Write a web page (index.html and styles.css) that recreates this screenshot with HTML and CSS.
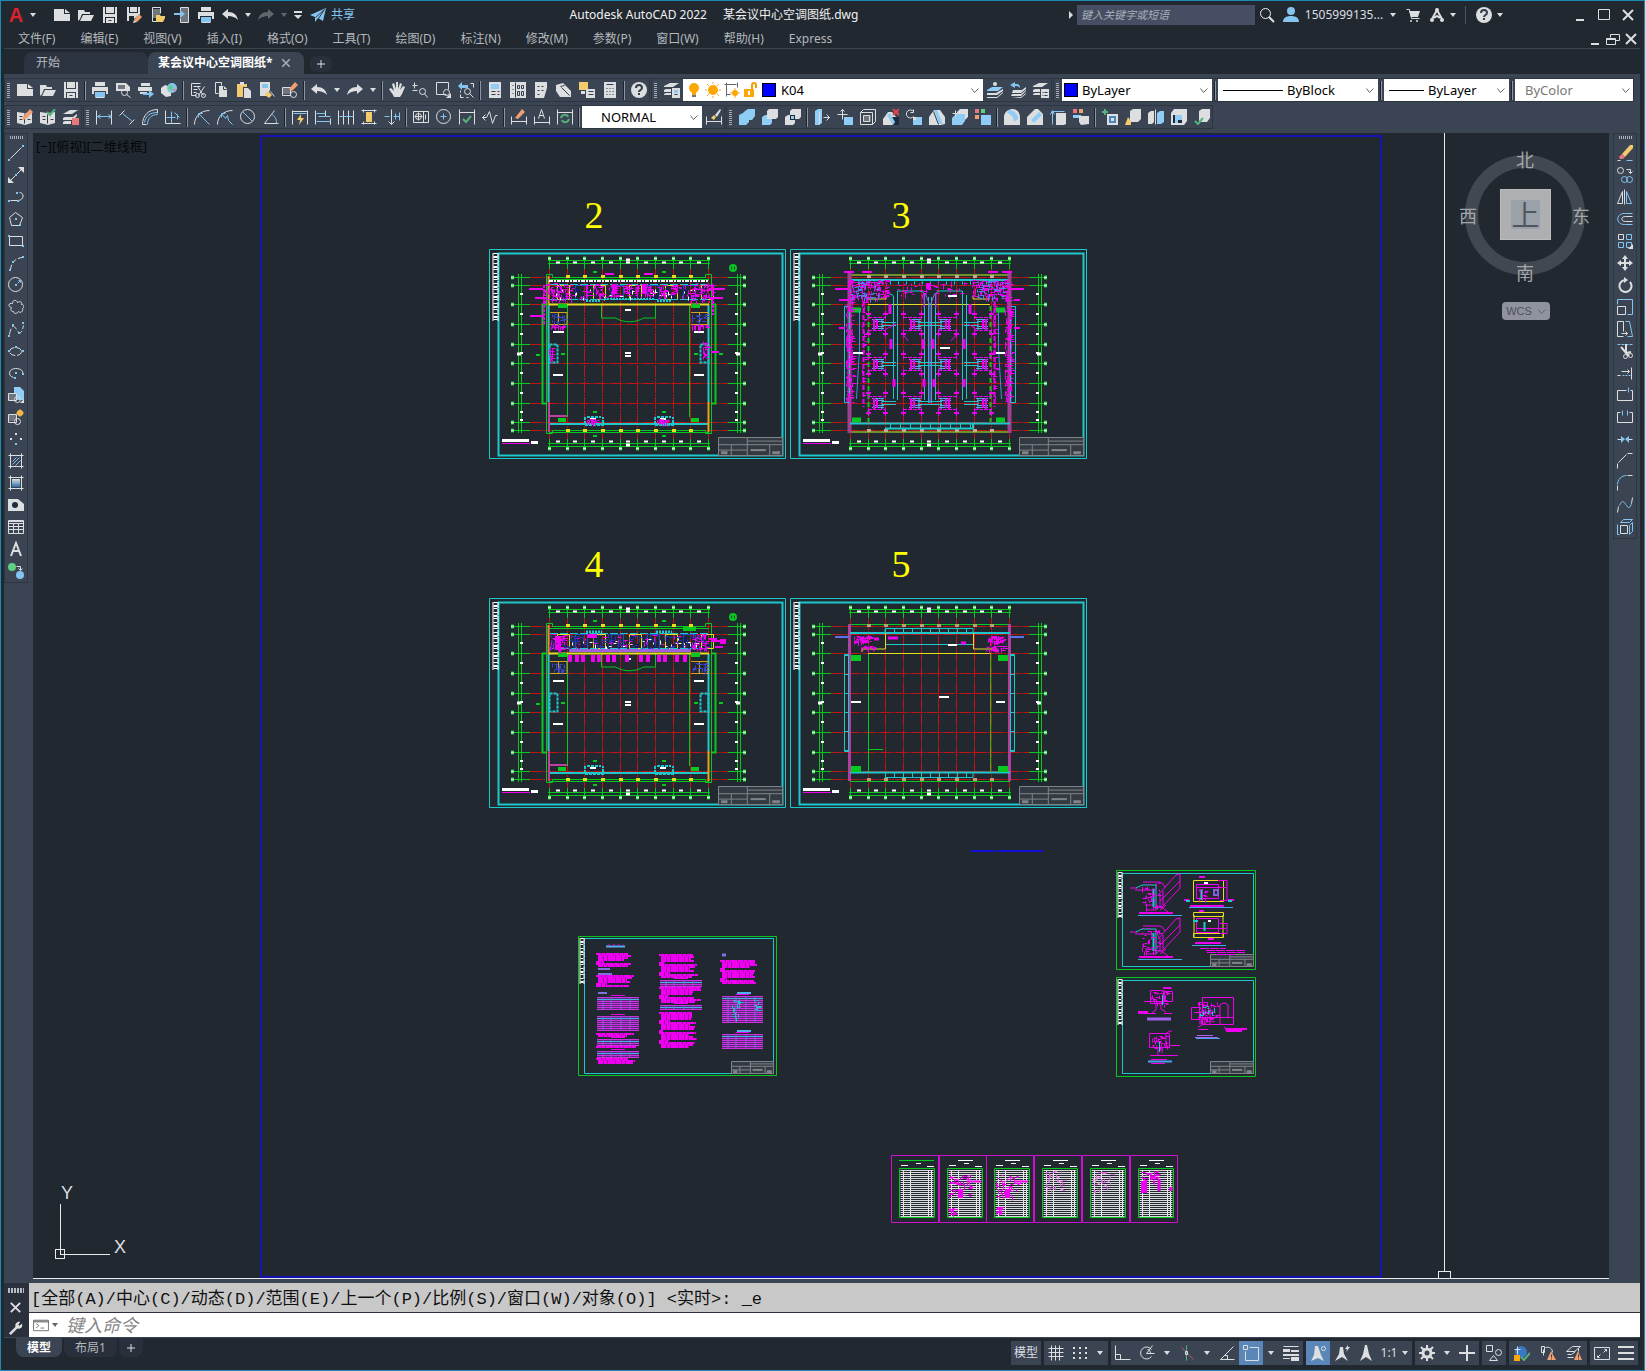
FILE: index.html
```html
<!DOCTYPE html>
<html lang="zh-CN">
<head>
  <meta charset="UTF-8" />
  <meta name="viewport" content="width=device-width, initial-scale=1.0"/>
  <title>Autodesk AutoCAD 2022 某会议中心空调图纸.dwg</title>
  <link rel="stylesheet" href="styles.css">
</head>
<body>
  <svg class="defs" aria-hidden="true">
    <defs>
      <linearGradient id="fade" x1="0" y1="0" x2="0" y2="1"><stop offset="0" stop-color="#dcdee0"/><stop offset="1" stop-color="#2f6ea5"/></linearGradient>

      <!-- files -->
      <symbol id="i-new" viewBox="0 0 16 16"><path class="wf" d="M0 2h10v5h6v7H0z"/><path class="wf" d="M11 2l5 4h-5z"/></symbol>
      <symbol id="i-open" viewBox="0 0 16 16"><path class="wf" d="M0 3h6l1 2h5v2H4l-2 5-2 2zM5 8h11l-3 6H2z"/></symbol>
      <symbol id="i-save" viewBox="0 0 16 16"><path class="wf" d="M1 0h2v7h10V0h2v16h-2v-6H3v6H1z"/><path class="wf" d="M4 0h8v6H4zM4 11h8v5H4z"/><path class="k" d="M6 13h3"/></symbol>
      <symbol id="i-saveas" viewBox="0 0 16 16"><path class="wf" d="M1 0h2v6h9V0h2v7l-6 5v-3H3v5H1z"/><path class="wf" d="M4 0h7v5H4z"/><path class="of" d="M8 13l5-6 3 3-5 5z"/><path class="wf" d="M8 13l3 2-4 1z"/></symbol>
      <symbol id="i-mopen" viewBox="0 0 16 16"><path class="w" d="M2 0h8v6M2 0v14h4"/><path class="gy" d="M3 2h7v9H3z"/><path class="yf" d="M6 8h4l1 1h4v2l-2 4H6z"/></symbol>
      <symbol id="i-msave" viewBox="0 0 16 16"><path class="gy" d="M6 1h8v14H6z"/><path class="w" d="M6 3V0h8v15H6v-4"/><path class="cf" d="M0 6h6V3l5 4-5 4V8H0z"/></symbol>
      <symbol id="i-print" viewBox="0 0 16 16"><path class="wf" d="M3 0h10v4H3zM0 5h16v7h-2V9H2v3H0z"/><path class="cf" d="M3 10h10v5H3z"/><path class="w" d="M3 15h9"/></symbol>
      <symbol id="i-preview" viewBox="0 0 16 16"><path class="wf" d="M1 1h10l4 4v4H1z"/><path class="gy" d="M3 3h7v4H3z"/><circle class="w" cx="9" cy="10" r="3"/><path class="w" d="M11 12l4 3"/></symbol>
      <symbol id="i-publish" viewBox="0 0 16 16"><path class="wf" d="M3 1h9v3H3zM0 5h14v4H0z"/><path class="wf" d="M2 10h7v2H2z"/><path class="cf" d="M5 11h6V8l5 4-5 4v-3H5z"/></symbol>
      <symbol id="i-globe" viewBox="0 0 16 16"><path class="wf" d="M0 6l4-3 6 2v9l-5 1-5-4z"/><circle class="cf" cx="11" cy="6" r="5"/><path class="gf" d="M8 3l4 1-1 4-4-1z"/><path class="rf" d="M12 7l3 0-2 3z"/></symbol>
      <symbol id="i-cut" viewBox="0 0 16 16"><path class="w" d="M1 1v12h5M1 1h9M3 4h7M3 7h4M3 10h3M7 4l6 9M14 4l-6 9"/><circle class="w" cx="7" cy="13" r="2"/><circle class="w" cx="13" cy="13" r="2"/></symbol>
      <symbol id="i-copy" viewBox="0 0 16 16"><path class="w" d="M5 11H2V0h6v3"/><path class="wf" d="M6 4h5l3 3v8H6z"/><path class="k" d="M10 4v3h3"/></symbol>
      <symbol id="i-paste" viewBox="0 0 16 16"><path class="yf" d="M1 2h10v3H7v10H1z"/><path class="wf" d="M4 0h4v3H4z"/><path class="wf" d="M8 6h4l3 3v7H8z"/></symbol>
      <symbol id="i-match" viewBox="0 0 16 16"><path class="wf" d="M1 0h10v8l-3 6H1z"/><path class="cf" d="M3 2h6v4H3z"/><path class="yf" d="M9 9l4 4-3 3-4-3z"/><path class="w" d="M11 9l4 5"/></symbol>
      <symbol id="i-block" viewBox="0 0 16 16"><path class="gy" d="M1 5h8v7H1z"/><path class="w" d="M0 5h8v8H0z"/><circle class="w" cx="11" cy="12" r="3"/><path class="of" d="M7 7l6-7 3 3-6 6z"/></symbol>
      <symbol id="i-undo" viewBox="0 0 16 16"><path class="wf" d="M0 7l6-5v3c6 0 9 3 10 8-3-3-6-4-10-4v3z"/></symbol>
      <symbol id="i-redo" viewBox="0 0 16 16"><path class="wf" d="M16 7l-6-5v3C4 5 1 8 0 13c3-3 6-4 10-4v3z"/></symbol>
      <symbol id="i-caret" viewBox="0 0 8 8"><path class="wf" d="M1 2h6L4 6z"/></symbol>
      <symbol id="i-custom" viewBox="0 0 10 10"><path class="wf" d="M1 1h8v2H1zM1 5h8L5 9z"/></symbol>
      <symbol id="i-plane" viewBox="0 0 16 16"><path class="cf" d="M0 8L16 1l-3 13-5-3-3 4v-5z"/><path class="k" d="M5 10l9-8-6 9"/></symbol>

      <!-- view -->
      <symbol id="i-hand" viewBox="0 0 16 16"><path class="wf" d="M5 15C4 12 1 9 0 7l2-1 3 3L3 2l2-1 2 6V0h2v7l2-6 2 1-2 6 3-4 2 1-3 7-2 3z"/></symbol>
      <symbol id="i-zoomrt" viewBox="0 0 16 16"><path class="w" d="M0 3h5M2 0v6M0 8h5"/><circle class="w" cx="10" cy="9" r="3"/><path class="w" d="M12 11l3 4"/></symbol>
      <symbol id="i-zoomwin" viewBox="0 0 16 16"><path class="w" d="M11 12H1V0h12v7"/><circle class="w" cx="11" cy="10" r="3"/><path class="wf" d="M16 11v5h-5z"/></symbol>
      <symbol id="i-zoomprev" viewBox="0 0 16 16"><path class="w" d="M2 12v3h3M2 8v2M12 1h3v4M8 15h2"/><path class="cf" d="M0 4l4-4v3h6v3H4v2z"/><circle class="w" cx="9" cy="9" r="3"/><path class="w" d="M11 11l4 4"/></symbol>
      <symbol id="i-props" viewBox="0 0 16 16"><path class="wf" d="M2 0h12v16H2z"/><path class="bf" d="M4 2h8v5H4z"/><path class="k" d="M4 9h4M4 12h4M10 9h2M10 12h2"/></symbol>
      <symbol id="i-dcenter" viewBox="0 0 16 16"><path class="wf" d="M0 0h16v16H0z"/><path class="k" d="M5 0v15M2 3h1M2 7h1M2 11h1M7 3h2v3H7zM11 3h2v3h-2zM7 9h2v4H7zM11 9h2v4h-2z"/></symbol>
      <symbol id="i-palette" viewBox="0 0 16 16"><path class="wf" d="M2 0h12v6l-3 10H2z"/><path class="k" d="M4 4h2M8 4h2M4 8h2M8 8h2M4 12h2"/></symbol>
      <symbol id="i-sheets" viewBox="0 0 16 16"><path class="wf" d="M0 3l7-2 8 8v6H4L0 9z"/><path class="k" d="M5 5l8 8M4 4l4-1"/></symbol>
      <symbol id="i-markup" viewBox="0 0 16 16"><path class="yf" d="M0 0h9v8H0z"/><path class="wf" d="M7 7h9v9H7zM2 9h4v3H2z"/><path class="k" d="M9 9h5M9 12h5"/></symbol>
      <symbol id="i-calc" viewBox="0 0 16 16"><path class="wf" d="M2 0h12v16H2z"/><path class="k" d="M4 2h7M4 6h1M7 6h1M10 6h1M4 9h1M7 9h1M10 9h1M4 12h1M7 12h1M10 12h1"/></symbol>
      <symbol id="i-help" viewBox="0 0 16 16"><circle class="wf" cx="8" cy="8" r="8"/><path class="k2" d="M5 6c0-4 6-4 6 0 0 2-3 2-3 4M8 11v2"/></symbol>

      <!-- layers -->
      <symbol id="i-layers" viewBox="0 0 16 16"><path class="wf" d="M0 4l6-3h9l-6 4H0zM0 8l2-1h5v3H0zM0 12l2-1h5v2H0z"/><path class="wf" d="M8 6h8v10H8z"/><path class="bf" d="M10 8h4v3h-4z"/><path class="k" d="M10 12h3"/></symbol>
      <symbol id="i-laycur" viewBox="0 0 16 16"><circle class="wf" cx="8" cy="2" r="2"/><path class="bf" d="M0 8l5-3h11l-5 4H0z"/><path class="wf" d="M0 11l9 0 7-4v2l-6 4H0zM0 15h10l6-5v1l-6 5H0z"/></symbol>
      <symbol id="i-layprev" viewBox="0 0 16 16"><path class="cf" d="M0 3l5-3v2c4 0 5 1 5 4-2-2-3-2-5-2v2z"/><path class="wf" d="M3 8h9l4-3v2l-5 4H2zM2 12h9l5-4v1l-5 5H1zM2 15h9l5-4v1l-5 4z"/></symbol>
      <symbol id="i-layst" viewBox="0 0 16 16"><path class="wf" d="M0 4l6-3h9l-6 4H0zM0 8l2-1h5v3H0zM0 12l2-1h5v2H0z"/><path class="wf" d="M8 7h8v9H8z"/><path class="k" d="M9 10h1M11 10h3M9 13h1M11 13h3"/></symbol>
      <symbol id="i-bulb" viewBox="0 0 12 16"><circle class="of2" cx="6" cy="6" r="5"/><path class="of2" d="M4 9h4v4H4z"/><path class="gy" d="M4 13h4v2H4z"/></symbol>
      <symbol id="i-sun" viewBox="0 0 16 16"><circle class="of2" cx="8" cy="8" r="5"/><path class="o" d="M8 0v2M8 14v2M0 8h2M14 8h2M2 2l2 2M14 2l-2 2M2 14l2-2M14 14l-2-2"/></symbol>
      <symbol id="i-vpf" viewBox="0 0 16 16"><path class="g" d="M2 12V2h10M0 2h2V0M13 0v5M2 14v-2h4"/><circle class="of2" cx="11" cy="11" r="3"/><path class="o" d="M11 6v2M11 14v2M6 11h2M14 11h2"/></symbol>
      <symbol id="i-lock" viewBox="0 0 14 16"><path class="of2" d="M0 7h10v8H0z"/><path class="o2" d="M8 7V3a2 2 0 0 1 4 0v3"/><path class="kw" d="M4 9h2v4H4z"/></symbol>

      <!-- references -->
      <symbol id="i-book1" viewBox="0 0 16 16"><path class="wf" d="M0 3l7 1 1 1 1-1 6-1v11l-7 2-8-2z"/><path class="k" d="M7 5v9M2 7h3M2 10h3M10 10h3"/><path class="of" d="M6 8l7-8 3 3-7 7-4 1z"/></symbol>
      <symbol id="i-book2" viewBox="0 0 16 16"><path class="wf" d="M0 3l7 1 1 1 1-1 6-1v11l-7 2-8-2z"/><path class="k" d="M7 5v9M2 7h3M2 10h3M10 10h3"/><path class="gs" d="M7 3l3 3 5-6"/></symbol>
      <symbol id="i-book3" viewBox="0 0 16 16"><path class="wf" d="M0 5l7-4h8l-6 4zM0 9l2-1h8l4-3v2l-4 4H0zM0 13l2-1h6v3H0z"/><path class="rf" d="M9 9h7v7H9z"/></symbol>

      <!-- dimensions -->
      <symbol id="i-dlin" viewBox="0 0 16 16"><path class="w" d="M0 1v14M15 1v14"/><path class="c" d="M1 7h14M4 5L1 7l3 2M12 5l3 2-3 2"/></symbol>
      <symbol id="i-dali" viewBox="0 0 16 16"><path class="w" d="M0 6l5-5M10 15l5-5"/><path class="c" d="M3 4l10 8"/></symbol>
      <symbol id="i-darc" viewBox="0 0 16 16"><path class="w" d="M0 15C0 6 6 0 15 0M0 15h4M15 0v4"/><path class="c" d="M2 13C3 7 7 3 15 3M5 15c0-6 4-10 10-10"/></symbol>
      <symbol id="i-dord" viewBox="0 0 16 16"><path class="w" d="M0 1v13h15"/><path class="c" d="M1 8h9M6 2v12M12 5v5M9 3l5 5"/></symbol>
      <symbol id="i-drad" viewBox="0 0 16 16"><path class="w" d="M0 15C0 7 6 1 15 1"/><path class="c" d="M4 4l11 11M4 8V4h4"/></symbol>
      <symbol id="i-djog" viewBox="0 0 16 16"><path class="w" d="M0 15C0 7 6 1 15 1"/><path class="c" d="M4 4l4 5 2-3 1 5 4 4M4 8V4h4"/></symbol>
      <symbol id="i-ddia" viewBox="0 0 16 16"><circle class="w" cx="7" cy="7" r="7"/><path class="c" d="M2 2l10 10"/></symbol>
      <symbol id="i-dang" viewBox="0 0 16 16"><path class="w" d="M11 1L1 14h14"/><path class="c" d="M8 5c3 1 5 4 5 9"/></symbol>
      <symbol id="i-dquick" viewBox="0 0 16 16"><path class="w" d="M0 1v14M15 1v14M0 2h15"/><path class="c" d="M1 4h13"/><path class="yf" d="M9 5l-4 6h3l-1 5 5-7H9z"/></symbol>
      <symbol id="i-dbase" viewBox="0 0 16 16"><path class="w" d="M0 1v14M10 1v6M15 9v6"/><path class="c" d="M1 4h9M1 12h14M3 7h12"/></symbol>
      <symbol id="i-dcont" viewBox="0 0 16 16"><path class="w" d="M0 1v14M5 1v14M10 1v14M15 1v14"/><path class="c" d="M1 7h14"/></symbol>
      <symbol id="i-dspace" viewBox="0 0 16 16"><path class="w" d="M0 1h15M0 14h15M2 0v3M13 0v3M2 12v3M13 12v3"/><path class="yf" d="M5 3h6v10H5z"/></symbol>
      <symbol id="i-dbreak" viewBox="0 0 16 16"><path class="w" d="M7 0v15M4 12l3 3 3-3"/><path class="c" d="M0 7h5M9 7h6M15 3v8M11 4v6"/></symbol>
      <symbol id="i-tol" viewBox="0 0 16 16"><path class="w" d="M0 2h15v11H0zM10 2v11M12 5v5"/><circle class="w" cx="5" cy="7" r="3"/><path class="w" d="M5 3v8M1 7h8"/></symbol>
      <symbol id="i-cmark" viewBox="0 0 16 16"><circle class="w" cx="7" cy="7" r="7"/><path class="c" d="M7 4v6M4 7h6"/></symbol>
      <symbol id="i-inspect" viewBox="0 0 16 16"><path class="w" d="M0 0v15M15 0v15M0 3h15"/><path class="gs" d="M4 10l3 3 5-6"/></symbol>
      <symbol id="i-jogl" viewBox="0 0 16 16"><path class="w" d="M0 8h4l3-6 3 12 3-8h2M3 5L0 8l3 3"/></symbol>
      <symbol id="i-dedit" viewBox="0 0 16 16"><path class="w" d="M0 7v8M15 7v8M0 12h15"/><path class="of" d="M4 9l7-9 3 3-7 7z"/></symbol>
      <symbol id="i-dtext" viewBox="0 0 16 16"><path class="w" d="M0 7v8M15 7v8M0 13h15M4 9l3-9 3 9M5 6h4"/></symbol>
      <symbol id="i-dupd" viewBox="0 0 16 16"><path class="w" d="M0 0v15M15 0v15M0 3h15"/><path class="gs" d="M4 9c1-4 6-4 7-1M12 10c-1 4-6 4-7 1"/></symbol>
      <symbol id="i-dstyle" viewBox="0 0 16 16"><path class="w" d="M0 7v8M15 7v8M0 12h15"/><path class="yf" d="M5 9l3-3 2 2-2 3z"/><path class="wf" d="M9 6l5-6 1 1-4 7z"/></symbol>

      <!-- solids -->
      <symbol id="i-union" viewBox="0 0 16 16"><path class="bf" d="M0 6l4-2 2-2 3-2h7v7l-3 4h-3v2l-3 3H0z"/></symbol>
      <symbol id="i-subt" viewBox="0 0 16 16"><path class="wf" d="M5 2l2-2h9v8l-2 2H5z"/><path class="bf" d="M0 8l3-2h2v4h5v4l-2 2H0z"/></symbol>
      <symbol id="i-inter" viewBox="0 0 16 16"><path class="wf" d="M5 2l2-2h9v8l-2 2H5zM0 8l3-2h7v8l-2 2H0z"/><path class="nf" d="M5 6h5v5H5z"/><path class="bf" d="M6 7h3v3H6z"/></symbol>
      <symbol id="i-extf" viewBox="0 0 16 16"><path class="bf" d="M1 2l3-2h4v14l-3 2H1z"/><path class="w" d="M9 8h6M12 5l3 3-3 3M5 2v13"/></symbol>
      <symbol id="i-movf" viewBox="0 0 16 16"><path class="w" d="M0 5h10M5 0v10M3 2l2-2 2 2"/><path class="bf" d="M7 8h9v8H7z"/></symbol>
      <symbol id="i-offf" viewBox="0 0 16 16"><path class="gy" d="M4 6h7v7H4z"/><path class="w" d="M0 3h12v12H0zM3 6h6v6H3zM0 3l3-3h12v12l-3 3"/></symbol>
      <symbol id="i-delf" viewBox="0 0 16 16"><path class="wf" d="M0 10l5-7h4l5 6v7H0z"/><path class="nf" d="M6 8h10v8h-6z"/><path class="bf" d="M4 6l3-2 5 9-2 3z"/><path class="rs" d="M10 0l6 6M16 0l-6 6"/></symbol>
      <symbol id="i-rotf" viewBox="0 0 16 16"><path class="w" d="M7 2a4 4 0 1 0 0 5M7 0v3H4"/><path class="bf" d="M7 8h9v8H7z"/><path class="wf" d="M7 8h3v3H7z"/></symbol>
      <symbol id="i-tapf" viewBox="0 0 16 16"><path class="wf" d="M0 8L5 1h6l5 7v7l-4 1H0z"/><path class="bf" d="M5 1h3l6 14h-4z"/><path class="k" d="M4 2l5 13"/></symbol>
      <symbol id="i-copf" viewBox="0 0 16 16"><path class="wf" d="M5 3l3-3h8v8l-3 3H5z"/><path class="bf" d="M0 9l4-4h9v7l-3 4H0z"/><path class="w" d="M0 4h6M3 1v6"/></symbol>
      <symbol id="i-colf" viewBox="0 0 16 16"><path class="rf" d="M0 0h4v4H0z"/><path class="gf" d="M6 0h4v4H6z"/><path class="of" d="M0 6h4v4H0z"/><path class="bf" d="M6 6h10v10H6z"/></symbol>
      <symbol id="i-cope" viewBox="0 0 16 16"><path class="wf" d="M0 7c1-5 5-7 9-7 4 0 7 4 7 8v8H0z"/><path class="bf" d="M5 1c5 0 9 4 9 9l-4 3c0-5-3-8-7-9z"/></symbol>
      <symbol id="i-cole" viewBox="0 0 16 16"><path class="wf" d="M0 8l8-8h3l5 5v11H0z"/><path class="bf" d="M4 11l8-8 3 3-8 8z"/></symbol>
      <symbol id="i-impr" viewBox="0 0 16 16"><path class="wf" d="M6 4h10v11l-2 1H6z"/><path class="c" d="M2 15V2h12M0 5l2-4 2 4"/></symbol>
      <symbol id="i-clean" viewBox="0 0 16 16"><path class="rf" d="M0 0h4v4H0z"/><path class="of" d="M6 0h4v4H6z"/><path class="bf" d="M0 6h8v3H0z"/><path class="wf" d="M6 7h10v8l-8 1-2-3z"/></symbol>
      <symbol id="i-addf" viewBox="0 0 16 16"><path class="gs" d="M0 3h6M3 0v6"/><path class="wf" d="M5 5h11v11H5z"/><path class="s" d="M8 8h5v5H8z"/></symbol>
      <symbol id="i-sepf" viewBox="0 0 16 16"><path class="wf" d="M5 2l3-2h8v10l-3 3H5z"/><path class="yf" d="M3 8l3 4v4H0z"/></symbol>
      <symbol id="i-shell" viewBox="0 0 16 16"><path class="wf" d="M0 4l3-2h3v11l-2 2H0z"/><path class="bf" d="M9 4l3-2h4v11l-3 2H9z"/><path class="w" d="M7 0v15"/></symbol>
      <symbol id="i-check" viewBox="0 0 16 16"><path class="wf" d="M0 4l3-4h13v12l-3 4H0z"/><path class="nf" d="M2 6h9v8H2z"/><path class="bf" d="M4 6h7v5H7v3H4z"/></symbol>
      <symbol id="i-valid" viewBox="0 0 16 16"><path class="wf" d="M5 2l3-2h8v9l-3 4H5z"/><path class="gs" d="M1 12l3 3 5-6"/></symbol>

      <!-- draw -->
      <symbol id="i-line" viewBox="0 0 16 16"><path class="w" d="M2 13L13 2"/><path class="cf" d="M0 14h2v2H0zM14 0h2v2h-2z"/></symbol>
      <symbol id="i-xline" viewBox="0 0 16 16"><path class="w" d="M1 14L14 1"/><path class="wf" d="M0 16v-6l6 6zM16 0v6l-6-6z"/><path class="cf" d="M7 7h2v2H7z"/></symbol>
      <symbol id="i-pline" viewBox="0 0 16 16"><path class="w" d="M2 11h7c7 0 7-8 2-8"/><path class="cf" d="M0 11h2v2H0zM9 11h2v2H9zM8 3h2v2H8z"/></symbol>
      <symbol id="i-polyg" viewBox="0 0 16 16"><path class="w" d="M7 1l7 5-3 8H3L1 6z"/><path class="cf" d="M7 7h2v2H7zM11 13h2v2h-2z"/></symbol>
      <symbol id="i-rect" viewBox="0 0 16 16"><path class="w" d="M1 3h13v9H1z"/><path class="cf" d="M0 2h2v2H0zM14 12h2v2h-2z"/></symbol>
      <symbol id="i-arc" viewBox="0 0 16 16"><path class="w" d="M2 14C3 7 6 3 14 2" stroke-dasharray="5 2"/><path class="cf" d="M1 14h2v2H1zM4 6h2v2H4zM14 1h2v2h-2z"/></symbol>
      <symbol id="i-circle" viewBox="0 0 16 16"><circle class="w" cx="7" cy="7" r="7"/><path class="c" d="M9 6l3-3M10 3h2v2"/><path class="cf" d="M7 7h2v2H7z"/></symbol>
      <symbol id="i-cloud" viewBox="0 0 16 16"><path class="w" d="M3 8C-1 7 0 3 4 4c0-4 4-4 5-1 3-2 5 0 4 2 3 0 3 3 1 4 1 3-2 5-4 3-2 3-5 2-5 0-3 0-3-2-2-4z"/></symbol>
      <symbol id="i-spline" viewBox="0 0 16 16"><path class="w" d="M1 13C3 3 5 3 8 8s5 5 7-4" stroke-dasharray="6 2"/><path class="cf" d="M0 14h2v2H0zM4 3h2v2H4zM10 11h2v2h-2zM14 1h2v2h-2z"/></symbol>
      <symbol id="i-ellipse" viewBox="0 0 16 16"><ellipse class="w" cx="7" cy="8" rx="6" ry="4" stroke-dasharray="6 2"/><path class="cf" d="M0 7h2v2H0zM14 7h2v2h-2zM7 3h2v2H7z"/></symbol>
      <symbol id="i-earc" viewBox="0 0 16 16"><path class="w" d="M5 12C-2 10 1 3 7 3s8 3 7 5"/><path class="cf" d="M7 7h2v2H7zM6 12h2v2H6zM14 8h2v2h-2z"/></symbol>
      <symbol id="i-insert" viewBox="0 0 16 16"><path class="bf" d="M6 0h6l4 4v9H6z"/><path class="gy" d="M1 6h8v7H1z"/><path class="w" d="M0 6h8v7H0z"/><circle class="w" cx="9" cy="12" r="3"/><path class="wf" d="M16 12v4h-4z"/></symbol>
      <symbol id="i-mkblock" viewBox="0 0 16 16"><path class="gy" d="M1 5h8v7H1z"/><path class="w" d="M0 5h8v8H0z"/><circle class="w" cx="9" cy="12" r="3"/><circle class="yf" cx="12" cy="4" r="3"/><path class="o" d="M12 0v8M8 4h8"/></symbol>
      <symbol id="i-point" viewBox="0 0 16 16"><path class="wf" d="M7 2h2v2H7zM2 7h2v2H2zM12 7h2v2h-2z"/><path class="cf" d="M7 12h2v2H7z"/></symbol>
      <symbol id="i-hatch" viewBox="0 0 16 16"><path class="c" d="M4 8l4-4M4 11l7-7M7 12l5-5"/><path class="w" d="M2 0v15M13 0v15M0 2h15M0 13h15"/></symbol>
      <symbol id="i-grad" viewBox="0 0 16 16"><path fill="url(#fade)" d="M4 4h8v8H4z"/><path class="w" d="M2 0v15M13 0v15M0 2h15M0 13h15"/></symbol>
      <symbol id="i-region" viewBox="0 0 16 16"><path class="wf" d="M0 2h10l6 5v7H0z"/><circle class="nf" cx="7" cy="8" r="3"/></symbol>
      <symbol id="i-table" viewBox="0 0 16 16"><path class="w" d="M0 1h15v13H0zM0 4h15M0 7h15M0 10h15M5 4v10M10 4v10M0 2h15"/></symbol>
      <symbol id="i-mtext" viewBox="0 0 16 16"><path class="w2" d="M3 15L8 2l5 13M5 10h6"/></symbol>
      <symbol id="i-addsel" viewBox="0 0 16 16"><circle class="gf" cx="4" cy="4" r="4"/><circle class="cf" cx="12" cy="12" r="4"/><path class="w" d="M8 3h4v4M10 5l2 2 2-2"/></symbol>

      <!-- modify -->
      <symbol id="i-erase" viewBox="0 0 16 16"><path class="yf" d="M5 9l8-9h3v3l-8 9z"/><path class="rf" d="M2 12l3-3 3 3-2 2H3z"/><path class="c" d="M9 15h6"/><path class="w" d="M0 15h3"/></symbol>
      <symbol id="i-cpy" viewBox="0 0 16 16"><circle class="w" cx="3" cy="3" r="3"/><path class="w" d="M9 2h4v4M11 4l2 2 2-2"/><circle class="c" cx="7" cy="12" r="3"/><circle class="c" cx="12" cy="12" r="3"/></symbol>
      <symbol id="i-mirror" viewBox="0 0 16 16"><path class="w" d="M5 2v12H0zM7 0v15"/><path class="c" d="M9 2v12h5z"/></symbol>
      <symbol id="i-offset" viewBox="0 0 16 16"><path class="c" d="M15 2H7C-2 2-2 13 7 13h8"/><path class="w" d="M15 5H8c-5 0-5 5 0 5h7"/></symbol>
      <symbol id="i-array" viewBox="0 0 16 16"><path class="w" d="M1 1h5v5H1z"/><path class="c" d="M9 1h5v5H9zM1 9h5v5H1zM9 9h5v5H9z"/><path class="wf" d="M16 11v5h-5z"/></symbol>
      <symbol id="i-move" viewBox="0 0 16 16"><path class="wf" d="M8 0l3 4H9v3h3V5l4 3-4 3V9H9v3h2l-3 4-3-4h2V9H4v2L0 8l4-3v2h3V4H5z"/></symbol>
      <symbol id="i-rotate" viewBox="0 0 16 16"><path class="w2" d="M13 5a6 6 0 1 1-5-2"/><path class="wf" d="M7 0l4 3-4 3z"/></symbol>
      <symbol id="i-scale" viewBox="0 0 16 16"><path class="c" d="M0 5V0h15v15h-5"/><path class="w" d="M0 7h8v8H0z"/></symbol>
      <symbol id="i-stretch" viewBox="0 0 16 16"><path class="w" d="M6 10V0H0v15h6M4 12h6M8 10l2 2-2 2"/><path class="c" d="M8 0h4l3 15h-5"/></symbol>
      <symbol id="i-trim" viewBox="0 0 16 16"><path class="c" d="M0 1h15" stroke-dasharray="3 1"/><path class="w2" d="M9 1v9l3 3M4 4l6 7M9 10l5-1"/><circle class="w" cx="8" cy="13" r="2"/><circle class="w" cx="13" cy="12" r="2"/></symbol>
      <symbol id="i-extend" viewBox="0 0 16 16"><path class="w" d="M14 2v12M4 6h8M10 4l2 2-2 2M0 10h3"/><path class="c" d="M5 10h9" stroke-dasharray="2 1"/></symbol>
      <symbol id="i-brkpt" viewBox="0 0 16 16"><path class="w" d="M9 3H0v10h15V3h-2"/><path class="c" d="M11 0v5"/></symbol>
      <symbol id="i-break" viewBox="0 0 16 16"><path class="w" d="M3 3H0v10h15V3h-3"/><path class="c" d="M5 1v5M10 1v5"/></symbol>
      <symbol id="i-join" viewBox="0 0 16 16"><path class="w" d="M0 8h5M11 8h4"/><path class="cf" d="M4 5l4 3-4 4zM12 5L8 8l4 4z"/></symbol>
      <symbol id="i-chamfer" viewBox="0 0 16 16"><path class="w" d="M0 15v-5M10 0h5"/><path class="w" d="M1 9l8-8"/></symbol>
      <symbol id="i-fillet" viewBox="0 0 16 16"><path class="w" d="M0 15v-5M10 0h5"/><path class="c" d="M0 9c0-5 4-9 9-9"/></symbol>
      <symbol id="i-blend" viewBox="0 0 16 16"><path class="w" d="M0 15l1-6M14 6l1-6"/><path class="c" d="M2 8c3-7 5-3 7 0s4 3 5-3"/></symbol>
      <symbol id="i-explode" viewBox="0 0 16 16"><path class="w" d="M3 6h7v8H3z"/><path class="c" d="M0 5v10h2M3 3l3-3h9l-3 3zM12 6l3-3v9l-3 3z"/></symbol>

      <!-- window and status -->
      <symbol id="i-search" viewBox="0 0 16 16"><circle class="g" cx="6" cy="6" r="5"/><circle class="w" cx="6" cy="6" r="5"/><path class="w2" d="M10 10l5 5"/></symbol>
      <symbol id="i-user" viewBox="0 0 16 16"><circle class="cf" cx="8" cy="4" r="4"/><path class="cf" d="M0 15c0-4 3-6 8-6s8 2 8 6z"/></symbol>
      <symbol id="i-cart" viewBox="0 0 16 16"><path class="w" d="M1 2h3l2 9h8"/><path class="wf" d="M4 4h11l-2 6H6z"/><circle class="wf" cx="6" cy="14" r="1"/><circle class="wf" cx="12" cy="14" r="1"/></symbol>
      <symbol id="i-appstore" viewBox="0 0 16 16"><path class="w2" d="M3 12L8 3l5 9M5 11l3-2 3 2"/><circle class="wf" cx="8" cy="3" r="2"/><circle class="wf" cx="3" cy="13" r="2"/><circle class="wf" cx="13" cy="13" r="2"/></symbol>
      <symbol id="i-min" viewBox="0 0 16 16"><path class="w2" d="M4 13h8"/></symbol>
      <symbol id="i-max" viewBox="0 0 16 16"><path class="w" d="M2 2h11v10H2z"/></symbol>
      <symbol id="i-restore" viewBox="0 0 16 16"><path class="w" d="M5 6V3h9v6h-4M1 7h9v6H1zM1 8h9"/></symbol>
      <symbol id="i-close" viewBox="0 0 16 16"><path class="w2" d="M3 3l10 10M13 3L3 13"/></symbol>
      <symbol id="i-wrench" viewBox="0 0 16 16"><path class="wf" d="M1 13l7-7c-1-3 2-6 5-5l-2 3 1 1 3-2c1 4-2 6-5 5l-7 7z"/></symbol>
      <symbol id="i-prompt" viewBox="0 0 20 16"><path class="g" d="M1 2h17v12H1zM1 3h17M1 4h17M4 6l3 2-3 3M9 11h4"/></symbol>
      <symbol id="i-grid" viewBox="0 0 16 16"><path class="w" d="M3 0v15M7 0v15M11 0v15M0 3h15M0 7h15M0 11h15"/></symbol>
      <symbol id="i-snap" viewBox="0 0 16 16"><path class="wf" d="M1 2h2v2H1zM7 2h2v2H7zM13 2h2v2h-2zM1 7h2v2H1zM7 7h2v2H7zM13 7h2v2h-2zM1 12h2v2H1zM7 12h2v2H7zM13 12h2v2h-2z"/></symbol>
      <symbol id="i-ortho" viewBox="0 0 16 16"><path class="w" d="M0 0v14h15M0 9h5v5"/></symbol>
      <symbol id="i-polar" viewBox="0 0 16 16"><path class="w" d="M12 4a6 6 0 1 0 0 7M7 8h8M7 8l6-8M8 4c2 0 3 2 3 4"/></symbol>
      <symbol id="i-iso" viewBox="0 0 16 16"><path class="rs1" d="M2 2l12 12"/><path class="gs1" d="M7 0v15"/><path class="w" d="M6 6h2v3H6z"/></symbol>
      <symbol id="i-otrack" viewBox="0 0 16 16"><path class="w" d="M14 1L1 14h14M5 10h3v4"/></symbol>
      <symbol id="i-osnap" viewBox="0 0 16 16"><path class="w" d="M0 0h4v4H0zM6 2h9v13H2V6"/></symbol>
      <symbol id="i-lwt" viewBox="0 0 16 16"><path class="w" d="M0 1h15"/><path class="wf" d="M0 4h7v3H0zM8 5h8v2H8zM0 9h16v2H0zM0 13h7v1H0zM8 12h8v4H8z"/></symbol>
      <symbol id="i-ann1" viewBox="0 0 16 16"><path class="wf" d="M5 1h3l3 9 3 6-6-3-7 3 3-6z"/><circle class="w" cx="13" cy="3" r="2"/></symbol>
      <symbol id="i-ann2" viewBox="0 0 16 16"><path class="wf" d="M6 2h3l1 7 4 7-6-4-7 4 4-7zM14 0l-3 4h2l-1 3 4-5h-2z"/></symbol>
      <symbol id="i-ann3" viewBox="0 0 16 16"><path class="wf" d="M7 0h2l2 9 3 7-6-4-6 4 3-7z"/></symbol>
      <symbol id="i-gear" viewBox="0 0 16 16"><circle class="w3" cx="8" cy="8" r="4"/><path class="w2" d="M8 0v3M8 13v3M0 8h3M13 8h3M2 2l3 3M11 11l3 3M14 2l-3 3M5 11l-3 3"/></symbol>
      <symbol id="i-plus" viewBox="0 0 16 16"><path class="w2" d="M8 0v16M0 8h16"/></symbol>
      <symbol id="i-iso2" viewBox="0 0 16 16"><path class="w" d="M0 0h6v6H0zM7 10l4 5H3z"/><circle class="w" cx="12" cy="7" r="3"/></symbol>
      <symbol id="i-hw" viewBox="0 0 16 16"><circle class="sf" cx="7" cy="7" r="6"/><path class="w" d="M0 4h6M3 1v8"/><path class="of2" d="M0 10h6v6H0z"/><path class="gs" d="M7 12l3 3 6-7"/></symbol>
      <symbol id="i-warn1" viewBox="0 0 16 16"><path class="w" d="M1 1h3v6H1zM3 4v6M5 2c4-1 7 1 7 5"/><path class="of" d="M11 6l5 9H7z"/><path class="k" d="M11 9v3M11 13v1"/></symbol>
      <symbol id="i-warn2" viewBox="0 0 16 16"><path class="w" d="M0 6l6-5h8L8 6zM1 9h4l4-3M1 12h6M12 3v3"/><path class="of" d="M12 6l4 9H8z"/><path class="k" d="M12 9v3M12 13v1"/></symbol>
      <symbol id="i-full" viewBox="0 0 16 16"><path class="w" d="M0 2h15v12H0z"/><path class="w" d="M9 7l3-3M10 4h2v2M6 9l-3 3M3 10v2h2"/></symbol>
      <symbol id="i-burger" viewBox="0 0 16 16"><path class="w2" d="M0 2h16M0 8h16M0 14h16"/></symbol>
      <symbol id="i-chev" viewBox="0 0 8 8"><path class="g" d="M0 2l3 4 4-4"/></symbol>
    </defs>
  </svg>

  <div class="window">
    <header class="titlebar">
      <button class="app" aria-label="应用程序菜单"><span class="logo">A</span><svg class="caret"><use href="#i-caret"/></svg></button>
      <div class="quick">
        <button aria-label="新建"><svg><use href="#i-new"/></svg></button>
        <button aria-label="打开"><svg><use href="#i-open"/></svg></button>
        <button aria-label="保存"><svg><use href="#i-save"/></svg></button>
        <button aria-label="另存为"><svg><use href="#i-saveas"/></svg></button>
        <button aria-label="从移动设备打开"><svg><use href="#i-mopen"/></svg></button>
        <button aria-label="保存到移动设备"><svg><use href="#i-msave"/></svg></button>
        <button aria-label="打印"><svg><use href="#i-print"/></svg></button>
        <button aria-label="放弃"><svg><use href="#i-undo"/></svg></button>
        <button class="slim" aria-label="放弃列表"><svg class="caret"><use href="#i-caret"/></svg></button>
        <button class="dim" aria-label="重做"><svg><use href="#i-redo"/></svg></button>
        <button class="slim dim" aria-label="重做列表"><svg class="caret"><use href="#i-caret"/></svg></button>
        <button class="cust" aria-label="自定义"><svg><use href="#i-custom"/></svg></button>
        <button class="share"><svg><use href="#i-plane"/></svg>共享</button>
      </div>
      <h1><span>Autodesk AutoCAD 2022</span><span>某会议中心空调图纸.dwg</span></h1>
      <div class="info">
        <span class="play"></span>
        <input type="search" placeholder="键入关键字或短语" aria-label="搜索">
        <button aria-label="搜索"><svg><use href="#i-search"/></svg></button>
        <button class="account"><svg><use href="#i-user"/></svg><span>1505999135...</span><svg class="caret"><use href="#i-caret"/></svg></button>
        <button aria-label="购物车"><svg><use href="#i-cart"/></svg></button>
        <button aria-label="应用商店"><svg><use href="#i-appstore"/></svg></button>
        <svg class="caret"><use href="#i-caret"/></svg>
        <span class="rule"></span>
        <button aria-label="帮助"><svg><use href="#i-help"/></svg></button>
        <svg class="caret"><use href="#i-caret"/></svg>
      </div>
      <div class="winctl">
        <button aria-label="最小化"><svg><use href="#i-min"/></svg></button>
        <button aria-label="最大化"><svg><use href="#i-max"/></svg></button>
        <button aria-label="关闭"><svg><use href="#i-close"/></svg></button>
      </div>
    </header>

    <nav class="menubar">
      <a href="#">文件(F)</a>
      <a href="#">编辑(E)</a>
      <a href="#">视图(V)</a>
      <a href="#">插入(I)</a>
      <a href="#">格式(O)</a>
      <a href="#">工具(T)</a>
      <a href="#">绘图(D)</a>
      <a href="#">标注(N)</a>
      <a href="#">修改(M)</a>
      <a href="#">参数(P)</a>
      <a href="#">窗口(W)</a>
      <a href="#">帮助(H)</a>
      <a href="#">Express</a>
      <div class="docctl">
        <button aria-label="最小化图形"><svg><use href="#i-min"/></svg></button>
        <button aria-label="还原图形"><svg><use href="#i-restore"/></svg></button>
        <button aria-label="关闭图形"><svg><use href="#i-close"/></svg></button>
      </div>
    </nav>

    <div class="filetabs">
      <a href="#" class="tab">开始</a>
      <a href="#" class="tab active">某会议中心空调图纸* <svg><use href="#i-close"/></svg></a>
      <button class="addtab" aria-label="新图形"><svg><use href="#i-plus"/></svg></button>
    </div>

    <div class="dock">
      <div class="dockrow">
        <div class="toolbar">
          <i class="grip"></i>
          <button aria-label="新建"><svg><use href="#i-new"/></svg></button>
          <button aria-label="打开"><svg><use href="#i-open"/></svg></button>
          <button aria-label="保存"><svg><use href="#i-save"/></svg></button>
          <i class="sep"></i>
          <button aria-label="打印"><svg><use href="#i-print"/></svg></button>
          <button aria-label="打印预览"><svg><use href="#i-preview"/></svg></button>
          <button aria-label="发布"><svg><use href="#i-publish"/></svg></button>
          <button aria-label="三维打印"><svg><use href="#i-globe"/></svg></button>
          <i class="sep"></i>
          <button aria-label="剪切"><svg><use href="#i-cut"/></svg></button>
          <button aria-label="复制"><svg><use href="#i-copy"/></svg></button>
          <button aria-label="粘贴"><svg><use href="#i-paste"/></svg></button>
          <button aria-label="特性匹配"><svg><use href="#i-match"/></svg></button>
          <button aria-label="块编辑器"><svg><use href="#i-block"/></svg></button>
          <i class="sep"></i>
          <button aria-label="放弃"><svg><use href="#i-undo"/></svg></button>
          <button class="slim" aria-label="放弃列表"><svg class="caret"><use href="#i-caret"/></svg></button>
          <button aria-label="重做"><svg><use href="#i-redo"/></svg></button>
          <button class="slim" aria-label="重做列表"><svg class="caret"><use href="#i-caret"/></svg></button>
          <i class="sep"></i>
          <button aria-label="平移"><svg><use href="#i-hand"/></svg></button>
          <button aria-label="实时缩放"><svg><use href="#i-zoomrt"/></svg></button>
          <button aria-label="窗口缩放"><svg><use href="#i-zoomwin"/></svg></button>
          <button aria-label="缩放上一个"><svg><use href="#i-zoomprev"/></svg></button>
          <i class="sep"></i>
          <button aria-label="特性"><svg><use href="#i-props"/></svg></button>
          <button aria-label="设计中心"><svg><use href="#i-dcenter"/></svg></button>
          <button aria-label="工具选项板"><svg><use href="#i-palette"/></svg></button>
          <button aria-label="图纸集"><svg><use href="#i-sheets"/></svg></button>
          <button aria-label="标记集"><svg><use href="#i-markup"/></svg></button>
          <button aria-label="计算器"><svg><use href="#i-calc"/></svg></button>
          <i class="sep"></i>
          <button aria-label="帮助"><svg><use href="#i-help"/></svg></button>
        </div>
        <div class="toolbar">
          <i class="grip"></i>
          <button aria-label="图层特性"><svg><use href="#i-layers"/></svg></button>
          <div class="combo layer">
            <svg><use href="#i-bulb"/></svg><svg><use href="#i-sun"/></svg><svg><use href="#i-vpf"/></svg><svg><use href="#i-lock"/></svg><b class="swatch"></b>
            <select aria-label="图层"><option>K04</option></select>
            <svg class="chev"><use href="#i-chev"/></svg>
          </div>
          <button aria-label="置为当前"><svg><use href="#i-laycur"/></svg></button>
          <button aria-label="上一个图层"><svg><use href="#i-layprev"/></svg></button>
          <button aria-label="图层状态"><svg><use href="#i-layst"/></svg></button>
        </div>
        <div class="toolbar">
          <i class="grip"></i>
          <div class="combo color"><b class="swatch"></b><select aria-label="颜色"><option>ByLayer</option></select><svg class="chev"><use href="#i-chev"/></svg></div>
          <i class="sep"></i>
          <div class="combo ltype"><b class="stroke"></b><select aria-label="线型"><option>ByBlock</option></select><svg class="chev"><use href="#i-chev"/></svg></div>
          <i class="sep"></i>
          <div class="combo lweight"><b class="stroke"></b><select aria-label="线宽"><option>ByLayer</option></select><svg class="chev"><use href="#i-chev"/></svg></div>
          <i class="sep"></i>
          <div class="combo pstyle"><select aria-label="打印样式" disabled><option>ByColor</option></select><svg class="chev"><use href="#i-chev"/></svg></div>
        </div>
      </div>
      <div class="dockrow">
        <div class="toolbar">
          <i class="grip"></i>
          <button aria-label="编辑参照"><svg><use href="#i-book1"/></svg></button>
          <button aria-label="检查参照"><svg><use href="#i-book2"/></svg></button>
          <button aria-label="图层转换"><svg><use href="#i-book3"/></svg></button>
        </div>
        <div class="toolbar">
          <i class="grip"></i>
          <button aria-label="线性"><svg><use href="#i-dlin"/></svg></button>
          <button aria-label="对齐"><svg><use href="#i-dali"/></svg></button>
          <button aria-label="弧长"><svg><use href="#i-darc"/></svg></button>
          <button aria-label="坐标"><svg><use href="#i-dord"/></svg></button>
          <i class="sep"></i>
          <button aria-label="半径"><svg><use href="#i-drad"/></svg></button>
          <button aria-label="折弯"><svg><use href="#i-djog"/></svg></button>
          <button aria-label="直径"><svg><use href="#i-ddia"/></svg></button>
          <button aria-label="角度"><svg><use href="#i-dang"/></svg></button>
          <i class="sep"></i>
          <button aria-label="快速标注"><svg><use href="#i-dquick"/></svg></button>
          <button aria-label="基线"><svg><use href="#i-dbase"/></svg></button>
          <button aria-label="连续"><svg><use href="#i-dcont"/></svg></button>
          <button aria-label="等距标注"><svg><use href="#i-dspace"/></svg></button>
          <button aria-label="折断标注"><svg><use href="#i-dbreak"/></svg></button>
          <i class="sep"></i>
          <button aria-label="公差"><svg><use href="#i-tol"/></svg></button>
          <button aria-label="圆心标记"><svg><use href="#i-cmark"/></svg></button>
          <button aria-label="检验"><svg><use href="#i-inspect"/></svg></button>
          <button aria-label="折弯线性"><svg><use href="#i-jogl"/></svg></button>
          <i class="sep"></i>
          <button aria-label="编辑标注"><svg><use href="#i-dedit"/></svg></button>
          <button aria-label="编辑标注文字"><svg><use href="#i-dtext"/></svg></button>
          <button aria-label="标注更新"><svg><use href="#i-dupd"/></svg></button>
          <i class="sep"></i>
          <div class="combo dimstyle"><select aria-label="标注样式"><option>NORMAL</option></select><svg class="chev"><use href="#i-chev"/></svg></div>
          <button aria-label="标注样式管理"><svg><use href="#i-dstyle"/></svg></button>
        </div>
        <div class="toolbar">
          <i class="grip"></i>
          <button aria-label="并集"><svg><use href="#i-union"/></svg></button>
          <button aria-label="差集"><svg><use href="#i-subt"/></svg></button>
          <button aria-label="交集"><svg><use href="#i-inter"/></svg></button>
          <i class="sep"></i>
          <button aria-label="拉伸面"><svg><use href="#i-extf"/></svg></button>
          <button aria-label="移动面"><svg><use href="#i-movf"/></svg></button>
          <button aria-label="偏移面"><svg><use href="#i-offf"/></svg></button>
          <button aria-label="删除面"><svg><use href="#i-delf"/></svg></button>
          <button aria-label="旋转面"><svg><use href="#i-rotf"/></svg></button>
          <button aria-label="倾斜面"><svg><use href="#i-tapf"/></svg></button>
          <button aria-label="复制面"><svg><use href="#i-copf"/></svg></button>
          <button aria-label="着色面"><svg><use href="#i-colf"/></svg></button>
          <i class="sep"></i>
          <button aria-label="圆角边"><svg><use href="#i-cope"/></svg></button>
          <button aria-label="倒角边"><svg><use href="#i-cole"/></svg></button>
          <button aria-label="复制边"><svg><use href="#i-impr"/></svg></button>
          <button aria-label="着色边"><svg><use href="#i-clean"/></svg></button>
          <i class="sep"></i>
          <button aria-label="压印"><svg><use href="#i-addf"/></svg></button>
          <button aria-label="清除"><svg><use href="#i-sepf"/></svg></button>
          <button aria-label="分割"><svg><use href="#i-shell"/></svg></button>
          <button aria-label="抽壳"><svg><use href="#i-check"/></svg></button>
          <button aria-label="检查"><svg><use href="#i-valid"/></svg></button>
        </div>
      </div>
    </div>

    <main class="workspace">
      <aside class="side">
        <div class="toolbar vertical">
          <i class="grip"></i>
          <button aria-label="直线"><svg><use href="#i-line"/></svg></button>
          <button aria-label="构造线"><svg><use href="#i-xline"/></svg></button>
          <button aria-label="多段线"><svg><use href="#i-pline"/></svg></button>
          <button aria-label="多边形"><svg><use href="#i-polyg"/></svg></button>
          <button aria-label="矩形"><svg><use href="#i-rect"/></svg></button>
          <button aria-label="圆弧"><svg><use href="#i-arc"/></svg></button>
          <button aria-label="圆"><svg><use href="#i-circle"/></svg></button>
          <button aria-label="修订云线"><svg><use href="#i-cloud"/></svg></button>
          <button aria-label="样条曲线"><svg><use href="#i-spline"/></svg></button>
          <button aria-label="椭圆"><svg><use href="#i-ellipse"/></svg></button>
          <button aria-label="椭圆弧"><svg><use href="#i-earc"/></svg></button>
          <button aria-label="插入块"><svg><use href="#i-insert"/></svg></button>
          <button aria-label="创建块"><svg><use href="#i-mkblock"/></svg></button>
          <button aria-label="点"><svg><use href="#i-point"/></svg></button>
          <button aria-label="图案填充"><svg><use href="#i-hatch"/></svg></button>
          <button aria-label="渐变色"><svg><use href="#i-grad"/></svg></button>
          <button aria-label="面域"><svg><use href="#i-region"/></svg></button>
          <button aria-label="表格"><svg><use href="#i-table"/></svg></button>
          <button aria-label="多行文字"><svg><use href="#i-mtext"/></svg></button>
          <button aria-label="添加选定对象"><svg><use href="#i-addsel"/></svg></button>
        </div>
      </aside>

      <section class="viewport">
        <svg id="model" viewBox="33 133 1576 1146" role="img" aria-label="模型空间">
          <rect x="261" y="136" width="1120" height="1141" fill="none" stroke="#1414b4" stroke-width="2"/>
          <g id="sheets"></g>
          <g class="num">
            <text x="594" y="228">2</text>
            <text x="901" y="228">3</text>
            <text x="594" y="577">4</text>
            <text x="901" y="577">5</text>
          </g>
          <path d="M971 851h24m2 0h46" stroke="#1010d8" stroke-width="2"/>
          <g class="ucs">
            <path d="M60 1204v50h50M55 1249h9v9h-9z"/>
            <text x="67" y="1199">Y</text>
            <text x="120" y="1253">X</text>
          </g>
          <path class="cross" d="M1444 133v1138M33 1278h1405M1451 1278h158M1438 1271h12v7h-12z"/>
        </svg>
        <p class="viewlabel">[−][俯视][二维线框]</p>
        <div class="viewcube">
          <div class="ring"></div>
          <button class="cube">上</button>
          <span class="n">北</span><span class="s">南</span><span class="w-side">西</span><span class="e">东</span>
          <button class="wcs">WCS <svg><use href="#i-chev"/></svg></button>
        </div>
      </section>

      <aside class="side right">
        <div class="toolbar vertical">
          <i class="grip"></i>
          <button aria-label="删除"><svg><use href="#i-erase"/></svg></button>
          <button aria-label="复制"><svg><use href="#i-cpy"/></svg></button>
          <button aria-label="镜像"><svg><use href="#i-mirror"/></svg></button>
          <button aria-label="偏移"><svg><use href="#i-offset"/></svg></button>
          <button aria-label="阵列"><svg><use href="#i-array"/></svg></button>
          <button aria-label="移动"><svg><use href="#i-move"/></svg></button>
          <button aria-label="旋转"><svg><use href="#i-rotate"/></svg></button>
          <button aria-label="缩放"><svg><use href="#i-scale"/></svg></button>
          <button aria-label="拉伸"><svg><use href="#i-stretch"/></svg></button>
          <button aria-label="修剪"><svg><use href="#i-trim"/></svg></button>
          <button aria-label="延伸"><svg><use href="#i-extend"/></svg></button>
          <button aria-label="打断于点"><svg><use href="#i-brkpt"/></svg></button>
          <button aria-label="打断"><svg><use href="#i-break"/></svg></button>
          <button aria-label="合并"><svg><use href="#i-join"/></svg></button>
          <button aria-label="倒角"><svg><use href="#i-chamfer"/></svg></button>
          <button aria-label="圆角"><svg><use href="#i-fillet"/></svg></button>
          <button aria-label="光顺曲线"><svg><use href="#i-blend"/></svg></button>
          <button aria-label="分解"><svg><use href="#i-explode"/></svg></button>
        </div>
      </aside>
    </main>

    <section class="command">
      <div class="cmdside">
        <i class="grip"></i>
        <button aria-label="关闭命令行"><svg><use href="#i-close"/></svg></button>
        <button aria-label="自定义命令行"><svg><use href="#i-wrench"/></svg></button>
      </div>
      <div class="cmdmain">
        <p class="history">[全部(A)/中心(C)/动态(D)/范围(E)/上一个(P)/比例(S)/窗口(W)/对象(O)] &lt;实时&gt;: _e</p>
        <div class="cmdline">
          <svg class="prompt"><use href="#i-prompt"/></svg><svg class="down"><use href="#i-caret"/></svg>
          <input type="text" placeholder="键入命令" aria-label="命令">
        </div>
      </div>
    </section>

    <footer class="statusbar">
      <div class="layouts">
        <a href="#" class="active">模型</a>
        <a href="#">布局1</a>
        <button aria-label="新建布局"><svg><use href="#i-plus"/></svg></button>
      </div>
      <div class="status">
        <div><button class="model">模型</button></div>
        <div>
          <button aria-label="栅格"><svg><use href="#i-grid"/></svg></button>
          <button aria-label="捕捉"><svg><use href="#i-snap"/></svg></button>
          <button class="slim" aria-label="捕捉设置"><svg class="caret"><use href="#i-caret"/></svg></button>
        </div>
        <div>
          <button aria-label="正交"><svg><use href="#i-ortho"/></svg></button>
          <button aria-label="极轴"><svg><use href="#i-polar"/></svg></button>
          <button class="slim" aria-label="极轴设置"><svg class="caret"><use href="#i-caret"/></svg></button>
          <button aria-label="等轴测"><svg><use href="#i-iso"/></svg></button>
          <button class="slim" aria-label="等轴测设置"><svg class="caret"><use href="#i-caret"/></svg></button>
          <button aria-label="对象捕捉追踪"><svg><use href="#i-otrack"/></svg></button>
          <button class="on" aria-label="对象捕捉"><svg><use href="#i-osnap"/></svg></button>
          <button class="slim" aria-label="对象捕捉设置"><svg class="caret"><use href="#i-caret"/></svg></button>
          <button aria-label="线宽"><svg><use href="#i-lwt"/></svg></button>
        </div>
        <div>
          <button class="on" aria-label="注释可见性"><svg><use href="#i-ann1"/></svg></button>
          <button aria-label="自动缩放"><svg><use href="#i-ann2"/></svg></button>
          <button aria-label="注释比例"><svg><use href="#i-ann3"/></svg></button>
          <button class="ratio">1:1<svg class="caret"><use href="#i-caret"/></svg></button>
        </div>
        <div>
          <button aria-label="工作空间"><svg><use href="#i-gear"/></svg></button>
          <button class="slim" aria-label="工作空间列表"><svg class="caret"><use href="#i-caret"/></svg></button>
          <button aria-label="注释监视器"><svg><use href="#i-plus"/></svg></button>
        </div>
        <div><button aria-label="隔离对象"><svg><use href="#i-iso2"/></svg></button></div>
        <div class="wide">
          <button aria-label="图形性能"><svg><use href="#i-hw"/></svg></button>
          <button aria-label="外部参照提醒"><svg><use href="#i-warn1"/></svg></button>
          <button aria-label="图层提醒"><svg><use href="#i-warn2"/></svg></button>
        </div>
        <div>
          <button aria-label="全屏显示"><svg><use href="#i-full"/></svg></button>
          <button aria-label="自定义"><svg><use href="#i-burger"/></svg></button>
        </div>
      </div>
    </footer>
  </div>
  <script src="drawing.js"></script>
</body>
</html>
```
FILE: styles.css
```css
* {
  box-sizing: border-box;
  margin: 0;
  padding: 0;
}

body {
  font-family: "Noto Sans", "Noto Sans CJK SC", sans-serif;
  font-size: 12px;
  line-height: 16px;
  background: #212830;
  color: #dcdee0;
}

button {
  font: inherit;
  color: inherit;
  background: none;
  border: none;
  display: flex;
  align-items: center;
  justify-content: center;
  flex: none;
}

a {
  color: inherit;
  text-decoration: none;
}

svg {
  display: block;
  flex: none;
}

symbol {
  overflow: visible;
}

.defs {
  position: absolute;
  width: 0;
  height: 0;
}

/* icon paint; thin strokes sit on the pixel centre */
.w, .w2, .w3, .c, .k, .k2, .g, .o, .o2, .s, .gs, .gs1, .rs, .rs1 { fill: none; }
.w, .c, .k, .g, .gs1, .rs1 { transform: translate(0.5px, 0.5px); }
.w { stroke: #dcdee0; }
.w2 { stroke: #dcdee0; stroke-width: 2; }
.w3 { stroke: #dcdee0; stroke-width: 3; }
.c { stroke: #84c4ee; }
.k { stroke: #343c4a; }
.k2 { stroke: #343c4a; stroke-width: 2; }
.g { stroke: #666; }
.o { stroke: #f5a623; }
.o2 { stroke: #f5a000; stroke-width: 2; }
.s { stroke: #4a86bc; stroke-width: 2; }
.gs { stroke: #56b27c; stroke-width: 2; }
.gs1 { stroke: #56b27c; }
.rs { stroke: #e04848; stroke-width: 2; }
.rs1 { stroke: #c05a5a; }
.wf { fill: #dcdee0; }
.cf { fill: #84c4ee; }
.bf { fill: #90cdf6; }
.sf { fill: #3b78c4; }
.nf { fill: #1e2b3c; }
.yf { fill: #f2cb6c; }
.of { fill: #f0a070; }
.of2 { fill: #fba704; }
.gf { fill: #5fd080; }
.rf { fill: #e8787c; }
.gy { fill: #70757e; }
.kw { fill: #fff; }

.window {
  display: flex;
  flex-direction: column;
  min-height: 100vh;
  border: 1px solid #1c8cb4;
  padding: 0 4px 0 3px;
}

/* title bar */
.titlebar {
  display: flex;
  align-items: center;
  height: 27px;
}

.titlebar svg {
  width: 16px;
  height: 16px;
}

.titlebar svg.caret,
.toolbar svg.caret,
.status svg.caret {
  width: 8px;
  height: 8px;
}

.app {
  width: 46px;
  gap: 6px;
  padding-right: 8px;
}

.logo {
  font-family: "Liberation Sans", sans-serif;
  font-weight: bold;
  font-size: 20px;
  line-height: 24px;
  color: #d8222c;
}

.quick,
.info,
.winctl {
  display: flex;
  align-items: center;
}

.quick button,
.info button,
.winctl button {
  width: 24px;
  height: 24px;
}

.quick .slim {
  width: 12px;
}

.dim {
  opacity: 0.35;
}

.quick .cust {
  width: 16px;
}

.quick .cust svg {
  width: 10px;
  height: 10px;
}

.quick .share {
  width: auto;
  padding: 0 4px;
  gap: 5px;
  color: #84c4ee;
}

h1 {
  flex: 1;
  font-size: 12px;
  font-weight: normal;
  text-align: center;
  white-space: nowrap;
  color: #f0f0f0;
}

h1 span + span {
  margin-left: 16px;
}

.play {
  border: 4px solid transparent;
  border-left-color: #dcdee0;
  border-right: none;
  margin-right: 4px;
}

.info input {
  width: 178px;
  height: 20px;
  padding: 0 4px;
  border: none;
  background: #454e62;
  color: #dcdee0;
  font: italic 11px "Noto Sans", "Noto Sans CJK SC", sans-serif;
}

.info input::placeholder {
  color: #a9afba;
}

.info .account {
  width: 122px;
  gap: 6px;
}

.rule {
  width: 1px;
  height: 18px;
  background: #4c5462;
  margin: 0 6px 0 8px;
}

.winctl {
  margin-left: 64px;
}

/* menu bar */
.menubar {
  display: flex;
  align-items: center;
  gap: 25px;
  height: 21px;
  padding: 2px 0 0 14px;
  border-bottom: 1px solid #3b4453;
  color: #b4b8be;
}

.docctl {
  display: flex;
  margin-left: auto;
}

.docctl button {
  width: 18px;
}

.docctl svg {
  width: 16px;
  height: 16px;
}

/* drawing tabs */
.filetabs {
  display: flex;
  align-items: flex-end;
  height: 25px;
  padding-left: 20px;
}

.tab {
  display: flex;
  align-items: center;
  width: 124px;
  height: 22px;
  padding-left: 12px;
  background: #2d3441;
  border-radius: 8px 8px 0 0;
  color: #b4b8be;
}

.tab.active {
  width: 156px;
  justify-content: space-between;
  padding: 0 12px 0 10px;
  background: #3b4453;
  color: #fff;
  font-weight: bold;
}

.tab svg {
  width: 12px;
  height: 12px;
  opacity: 0.7;
}

.addtab {
  width: 22px;
  height: 16px;
  margin: 0 0 2px 6px;
  background: #2a303b;
  border-radius: 6px;
}

.addtab svg {
  width: 8px;
  height: 8px;
}

/* docked toolbars */
.dock {
  display: flex;
  flex-direction: column;
  gap: 3px;
  padding: 4px 0;
  background: #3b4453;
}

.dockrow {
  display: flex;
  gap: 1px;
}

.toolbar {
  display: flex;
  align-items: center;
  height: 24px;
  outline: 1px solid #2d3542;
  outline-offset: -1px;
}

.toolbar button {
  width: 23px;
  height: 22px;
}

.toolbar button svg {
  width: 16px;
  height: 16px;
}

.toolbar .slim {
  width: 13px;
}

.grip {
  flex: none;
  width: 3px;
  height: 16px;
  margin: 0 3px;
  background: repeating-linear-gradient(#3b4453 0 1px, #a8adb6 1px 2px);
}

.sep {
  flex: none;
  width: 2px;
  height: 19px;
  margin: 0 2px;
  border-left: 1px solid #1d242d;
  border-right: 1px solid #8e95a0;
}

.combo {
  display: flex;
  align-items: center;
  height: 22px;
  background: #fff;
  color: #000;
}

.combo svg {
  width: 16px;
  height: 16px;
}

.combo .chev {
  width: 8px;
  height: 8px;
  margin-right: 4px;
}

.combo select {
  flex: 1;
  min-width: 0;
  height: 22px;
  padding: 0 4px;
  border: none;
  background: #fff;
  color: #000;
  font: 13px "Noto Sans", sans-serif;
  appearance: none;
}

.combo select:disabled {
  opacity: 1;
  color: #777;
  padding-left: 10px;
}

.swatch {
  width: 14px;
  height: 14px;
  margin: 0 0 0 2px;
  background: #00f;
  border: 1px solid #000;
}

.stroke {
  width: 60px;
  height: 1px;
  background: #000;
  margin-left: 5px;
}

.layer {
  width: 300px;
  padding-left: 3px;
  gap: 3px;
}

.layer .swatch {
  margin-left: 0;
}

.layer select {
  padding-left: 2px;
}

.color { width: 150px; }
.ltype { width: 160px; }
.lweight { width: 125px; }
.lweight .stroke { width: 35px; }
.pstyle { width: 119px; }
.dimstyle { width: 120px; }
.dimstyle select { padding-left: 19px; }

/* workspace */
.workspace {
  flex: 1;
  display: flex;
  background: #3b4453;
  padding-bottom: 4px;
}

.side {
  width: 29px;
  padding-right: 5px;
}

.side.right {
  width: 31px;
  padding: 0 3px 0 4px;
}

.vertical {
  flex-direction: column;
  height: auto;
  padding-bottom: 1px;
}

.vertical .grip {
  width: 14px;
  height: 3px;
  margin: 3px 0;
  background: repeating-linear-gradient(90deg, #3b4453 0 1px, #a8adb6 1px 2px);
}

.viewport {
  position: relative;
  flex: 1;
  min-width: 0;
  background: #212830;
  overflow: hidden;
}

#model {
  width: 100%;
  height: 100%;
}

.num {
  font: 38px "Liberation Serif", serif;
  fill: #ff0;
  text-anchor: middle;
}

.ucs {
  font: 18px "Liberation Sans", sans-serif;
  fill: #dcdee0;
  text-anchor: middle;
}

.ucs path,
.cross {
  fill: none;
  stroke: #e8eaec;
  shape-rendering: crispEdges;
}

.viewlabel {
  position: absolute;
  left: 3px;
  top: 5px;
  font-size: 13px;
  color: #05070a;
}

.viewcube {
  position: absolute;
  right: 14px;
  top: 13px;
  width: 140px;
  height: 176px;
  color: #a4a7ab;
  font-size: 18px;
  line-height: 24px;
}

.viewcube > * {
  position: absolute;
}

.ring {
  left: 10px;
  top: 9px;
  width: 120px;
  height: 120px;
  border: 13px solid #424850;
  border-radius: 50%;
}

.cube {
  left: 45px;
  top: 43px;
  width: 51px;
  height: 51px;
  background: #a9acad;
  border: 1px solid #bbb;
  box-shadow: inset 0 0 0 10px #adafb0, inset 0 0 0 30px #9aa1a8;
  color: #50565e;
  font-size: 28px;
}

.n { left: 61px; top: 2px; }
.s { left: 61px; top: 115px; }
.w-side { left: 4px; top: 58px; }
.e { right: 5px; top: 58px; }

.wcs {
  left: 47px;
  top: 156px;
  width: 48px;
  height: 18px;
  gap: 6px;
  background: #9092a0;
  border-radius: 4px;
  color: #4c5058;
  font: 11px "Liberation Sans", sans-serif;
}

.wcs svg {
  width: 8px;
  height: 8px;
}

/* command line */
.command {
  display: flex;
  background: #2b313c;
}

.cmdside {
  display: flex;
  flex-direction: column;
  align-items: center;
  justify-content: space-between;
  width: 25px;
  padding: 5px 2px 1px 0;
}

.cmdside .grip {
  width: 17px;
  height: 5px;
  background: repeating-linear-gradient(90deg, #2b313c 0 1px, #b8bcc4 1px 3px);
}

.cmdside svg {
  width: 15px;
  height: 15px;
}

.cmdmain {
  flex: 1;
}

.history {
  height: 29px;
  padding-left: 2px;
  background: #c8c8c8;
  color: #111;
  font: 17px/34px "Liberation Mono", "Noto Sans CJK SC", monospace;
  white-space: nowrap;
  overflow: hidden;
}

.cmdline {
  display: flex;
  align-items: center;
  height: 25px;
  border-top: 1px solid #2b313c;
  background: #fff;
  padding-left: 3px;
}

.prompt {
  width: 18px;
  height: 14px;
}

.down {
  width: 10px;
  height: 8px;
  filter: brightness(0.45);
}

.cmdline input {
  flex: 1;
  height: 24px;
  margin-left: 6px;
  border: none;
  outline: none;
  background: #fff;
  font: italic 18px "Noto Sans", "Noto Sans CJK SC", sans-serif;
}

.cmdline input::placeholder {
  color: #888;
}

/* status bar */
.statusbar {
  display: flex;
  align-items: flex-start;
  justify-content: space-between;
  height: 33px;
  border-top: 1px solid #3b4453;
}

.layouts {
  display: flex;
  padding-left: 12px;
  gap: 2px;
}

.layouts a,
.layouts button {
  height: 19px;
  padding: 0 11px;
  line-height: 20px;
  background: #2a303b;
  border-radius: 0 0 8px 8px;
  color: #b4b8be;
}

.layouts .active {
  background: #3b4453;
  color: #fff;
  font-weight: bold;
}

.layouts button {
  padding: 0 8px;
}

.layouts svg {
  width: 8px;
  height: 8px;
}

.status {
  display: flex;
  gap: 3px;
  padding: 3px 2px 0 0;
}

.status > div {
  display: flex;
  height: 24px;
  background: #3b4453;
}

.status button {
  width: 24px;
}

.status button svg {
  width: 16px;
  height: 16px;
}

.status .slim {
  width: 16px;
}

.status .model {
  width: 30px;
}

.status .ratio {
  width: 34px;
  gap: 4px;
}

.status .wide button {
  width: 26px;
}

.status .on {
  background: #5b87b8;
}
```
FILE: drawing.js
```js
const NS = 'http://www.w3.org/2000/svg';
const GREEN = '#06c81e', CYAN = '#1cc8cc', RED = '#c01414', MAG = '#f000f0', YEL = '#e8dc20', GRAY = '#80848a', WHITE = '#fff';

const COLS = [60, 78, 95, 113, 131, 148, 166, 184, 201, 219];
const ROWS = [28, 36, 55, 75, 95, 114, 134, 154, 173, 181];

let seed = 7;
function rnd(n) {
  seed = (seed * 16807) % 2147483647;
  return seed % n;
}

function group(x, y) {
  const g = document.createElementNS(NS, 'g');
  g.setAttribute('transform', `translate(${x} ${y})`);
  document.getElementById('sheets').appendChild(g);
  return g;
}

function line(g, d, color, width = 1, dash = '') {
  const p = document.createElementNS(NS, 'path');
  p.setAttribute('d', d);
  p.setAttribute('fill', 'none');
  p.setAttribute('stroke', color);
  p.setAttribute('stroke-width', width);
  if (dash) p.setAttribute('stroke-dasharray', dash);
  g.appendChild(p);
}

const box = (x, y, w, h) => `M${x} ${y}h${w}v${h}h${-w}z`;

function fill(g, x, y, w, h, color) {
  line(g, `M${x} ${y + h / 2}h${w}`, color, h);
}

// short random strokes, reads as dense pipework at this zoom
function clutter(g, x, y, w, h, n, color = MAG) {
  let d = '';
  for (let i = 0; i < n; i++) {
    const px = x + rnd(w) + 0.5, py = y + rnd(h) + 0.5;
    d += rnd(2) ? `M${px} ${py}h${2 + rnd(3)}` : `M${px} ${py}v${2 + rnd(3)}`;
  }
  line(g, d, color);
}

function titleBlock(g, x, y, w, h) {
  fill(g, x, y, w, h, '#343a42');
  line(g, box(x, y, w, h) + `M${x} ${y + h * 0.4}h${w}M${x + w * 0.45} ${y}v${h}M${x + w * 0.8} ${y + h * 0.4}v${h * 0.6}M${x} ${y + h * 0.7}h${w * 0.45}M${x + w * 0.2} ${y + h * 0.4}v${h * 0.6}M${x + w * 0.45} ${y + h * 0.2}h${w * 0.55}`, GRAY);
  line(g, `M${x + w * 0.5} ${y + h * 0.7}h${w * 0.24}`, GRAY, 2);
  line(g, `M${x + w * 0.04} ${y + h * 0.85}h${w * 0.1}M${x + w * 0.84} ${y + h * 0.85}h${w * 0.12}`, GRAY, 3);
}

function stamps(g, x, y, w, h) {
  line(g, `M${x} ${y}v${h}`, WHITE);
  line(g, `M${x + w / 2} ${y}v${h}`, WHITE, w - 1, '1 2 2 1 1 3');
  line(g, `M${x + w} ${y}v${h}`, WHITE, 1, '6 1');
}

function planSheet(x, y) {
  const g = group(x, y);
  line(g, box(0.5, 0.5, 296, 209), CYAN);
  line(g, box(9.5, 4.5, 284, 202), CYAN, 2);
  stamps(g, 4, 4, 5, 68);

  // axes
  let red = '', green = '', dots = '', ticks = '';
  COLS.forEach((c, i) => {
    red += `M${c + 0.5} 20V192`;
    green += `M${c + 0.5} 8V20M${c + 0.5} 190V199`;
    dots += `M${c - 1} 9.5h3M${c - 1} 199.5h3`;
    if (i) ticks += `M${c - 11} 13.5h4M${c - 11} 192.5h4`;
  });
  ROWS.forEach((r, i) => {
    red += `M41 ${r + 0.5}H241`;
    green += `M24 ${r + 0.5}H41M239 ${r + 0.5}H256`;
    dots += `M22 ${r + 0.5}h3M254 ${r + 0.5}h3`;
    if (i > 1) ticks += `M31 ${r - 10}h3M246 ${r - 10}h3`;
  });
  line(g, red, RED, 1, '12 1 2 1');
  line(g, green + 'M59 11.5H221M59 14.5H221M59 194.5H221M59 197.5H221M29.5 25V184M32.5 25V184M248.5 25V184M251.5 25V184', GREEN);
  line(g, dots, GREEN, 4);
  line(g, dots, '#c8f4cc', 2);
  line(g, ticks, WHITE, 2);
  line(g, 'M137 11h4M137 196h4M28 105h4M247 105h4', WHITE, 3);

  fill(g, 13, 190, 27, 3, WHITE);
  fill(g, 13, 194, 28, 1, MAG);
  fill(g, 42, 192, 7, 3, WHITE);
  titleBlock(g, 229.5, 188.5, 64, 18);
  return g;
}

function columns(g, color) {
  COLS.slice(1, 9).forEach(c => {
    fill(g, c - 1, 26, 4, 3, color);
    fill(g, c - 1, 180, 4, 3, color);
  });
}

// both lower floors share the same shell
function hall(g) {
  line(g, 'M57.5 25.5h6v3h153v-3h6v159h-6v-3h-153v3h-6zM60 30.5H220M60 183.5H220', GREEN);
  line(g, 'M58 55.5h-4.5v99H58M222 55.5h4.5v99H222', GREEN, 2);
  line(g, 'M59.5 56V153M219.5 56V153', CYAN, 2);
  line(g, 'M60 175H220', CYAN, 2);
  line(g, 'M59.5 27V56', '#e08a50', 2);
  line(g, 'M60 153V183M61 167h17', '#c040a0', 2);
  line(g, 'M219.5 153V183', '#e8a020', 2);
  line(g, 'M78.5 56V168M200.5 56V168M112.5 56v13h14c8 5 20 5 28 0h12V56', GREEN);
  line(g, 'M60 55.5H220', YEL, 2);
  line(g, 'M61 63.5h17v12h-17M69.5 64v11M202 63.5h17v12h-17M210.5 64v11', '#d8a020');
  line(g, box(60.5, 95.5, 8, 18) + box(211.5, 95.5, 8, 18), CYAN, 2, '3 1');
  line(g, 'M96 168v8h18v-8M166 168v8h18v-8M98 168h14M168 168h14', CYAN, 2, '3 1');
  line(g, 'M69 57h9M202 57h9M69 171h8M202 171h8', GREEN, 4);
  line(g, 'M104 23h4M173 23h4M104 163h4M173 163h4M104 187h4M173 187h4M47 106h4M72 105h4M205 105h4M230 105h4', GREEN, 2);
  line(g, 'M64 83h11M205 83h10M64 126h10M205 126h10M136 61h6M136 104h6M136 107h6M101 170h6M171 170h6', WHITE, 2);
  line(g, 'M247 19a3 3 0 1 1-6 0a3 3 0 1 1 6 0M244 16v6', GREEN, 2);
  columns(g, YEL);
  for (let x = 68; x < 214; x += 18) {
    line(g, box(x + 0.5, 36.5, 12, 14), x % 4 ? '#2450c8' : YEL);
    line(g, `M${x + 2} 39v5M${x + 8} 46v4`, '#18186c', 3);
  }
  line(g, 'M61 35.5H219M61 50.5H219', CYAN, 1, '8 2');
  clutter(g, 62, 65, 14, 8, 22, '#3848d8');
  clutter(g, 203, 65, 14, 8, 22, '#3848d8');
  clutter(g, 66, 40, 146, 9, 30, WHITE);
}

function sheet2(x, y) {
  const g = planSheet(x, y);
  hall(g);
  line(g, 'M60 32H219', WHITE, 2, '4 1 2 1');
  clutter(g, 54, 34, 30, 18, 90);
  clutter(g, 90, 35, 110, 15, 70);
  clutter(g, 202, 34, 22, 18, 70);
  [96, 108, 124, 135, 146, 158, 172, 182].forEach(c => clutter(g, c, 36, 4, 11, 16));
  fill(g, 123, 35, 5, 10, MAG);
  fill(g, 153, 35, 5, 10, MAG);
  clutter(g, 62, 76, 15, 3, 26);
  clutter(g, 203, 76, 15, 3, 26);
  clutter(g, 98, 170, 10, 4, 22);
  clutter(g, 168, 170, 10, 4, 22);
  clutter(g, 60, 99, 4, 12, 20);
  clutter(g, 214, 92, 5, 18, 24);
  line(g, 'M40 40h14M46 49h12M41 67h14M220 40h16M220 49h14M222 103h8M116 25h9M155 25h9', MAG, 2);
  line(g, 'M55 36v40M224 36v30', MAG, 2, '3 1');
  line(g, 'M97 52h14M168 52h14M115 50h50', CYAN, 2, '2 1');
}

function sheet3(x, y) {
  const g = planSheet(x, y);
  line(g, 'M60 26H220M60 183H220', '#70902c', 2);
  columns(g, '#b8b090');
  line(g, 'M60 31H220', CYAN, 2);
  line(g, 'M60 34H220', CYAN, 3, '1 7');
  line(g, 'M59.5 24V184M219.5 24V184', '#a04090', 4);
  line(g, 'M78 55.5H200M78 50h18v-3M183 47v3h17', YEL);
  line(g, 'M78.5 57V173M200.5 57V173', GREEN, 2, '5 3');
  line(g, 'M62 61h9M206 61h9M62 171h9M206 171h9', GREEN, 5);
  line(g, 'M60 174.5H220M95 179.5h88V174', CYAN, 2);
  line(g, 'M100 177H183', CYAN, 4, '1 9');
  line(g, box(54.5, 57.5, 5, 96) + box(220.5, 57.5, 5, 96), CYAN);

  // supply ducts
  line(g, 'M103.500 150V48q0-3-4-3M107.500 151V42h22q5 0 5 5V151M138.500 48v106M141.500 48v106M145.500 151V47q0-5 5-5h22V151M176.500 150V46', CYAN);
  line(g, 'M135 44l4 10V154M145 44l-4 10V154', '#8070e0');
  [75, 115, 154].forEach(r => {
    line(g, `M92 ${r - 1.5}h14M92 ${r + 1.5}h14M128 ${r - 1.5}h24M128 ${r + 1.5}h24M174 ${r - 1.5}h14M174 ${r + 1.5}h14`, CYAN);
    [[88, 78, 95, 1], [125, 113, 131, 1], [155, 148, 166, -1], [192, 184, 201, -1]].forEach(([cx, l, rr, side]) => {
      line(g, `M${cx - 6} ${r - 4.5}h12M${cx - 6} ${r + 4.5}h12M${cx - 5} ${r - 2.5}h11M${cx - 5} ${r + 2.5}h11M${cx + side * 4} ${r - 5}v11`, '#58a8f0');
      line(g, `M${cx - side * 4} ${r - 5}v11M${cx - side} ${r - 4}v9`, MAG, 2);
      line(g, `M${l} ${r - 6.5}h${rr - l}M${l} ${r + 6.5}h${rr - l}M${l + 0.5} ${r - 13}v8M${rr + 0.5} ${r - 13}v8M${l + 0.5} ${r + 5}v8M${rr + 0.5} ${r + 5}v8`, MAG, 1, '4 1');
      line(g, `M${l - 2} ${r - 10}h5M${rr - 2} ${r - 10}h5M${l - 2} ${r + 10}h5M${rr - 2} ${r + 10}h5`, MAG, 2);
    });
  });
  line(g, 'M101 90v10M133 90v10M143 90v10M174 90v10M104 130v8M134 130v8M144 130v8M174 130v8M100 55v10M180 55v10', MAG, 3);
  line(g, 'M112 84l6 8M168 84l-7 8M96 80l10-5M186 80l-8-5M134 45v14M146 45v14', MAG);

  // plant rooms
  clutter(g, 58, 31, 40, 18, 150);
  clutter(g, 182, 31, 38, 18, 150);
  clutter(g, 60, 32, 30, 18, 50, '#5080e8');
  clutter(g, 186, 32, 30, 18, 50, '#5080e8');
  clutter(g, 106, 32, 70, 14, 50);
  fill(g, 136, 34, 5, 6, MAG);
  line(g, 'M54 23h10M72 23h10M198 23h10M212 23h10M45 40h14M49 51h10M49 79h6M220 40h14M224 51h6M224 79h6', MAG, 2);
  clutter(g, 56, 50, 7, 104, 170);
  clutter(g, 215, 50, 7, 104, 170);
  clutter(g, 72, 52, 3, 104, 30);
  clutter(g, 203, 52, 3, 104, 30);
  line(g, 'M73.5 52V158M204.5 52V158', MAG, 2, '5 2');
  line(g, 'M69.5 60V100l-3 50M208.5 60V100l3 50', '#4090d8');
  line(g, 'M63 104h10M206 104h9M150 99h10M158 47h9', WHITE, 2);
}

function sheet4(x, y) {
  const g = planSheet(x, y);
  hall(g);
  clutter(g, 61, 36, 15, 16, 60);
  clutter(g, 203, 36, 15, 16, 60);
  fill(g, 66, 38, 6, 14, MAG);
  clutter(g, 80, 37, 120, 12, 36);
  clutter(g, 60, 36, 156, 15, 120, '#2838b0');
  line(g, 'M80 52.5H202', '#a060e0', 3);
  [79, 86, 92, 102, 108, 117, 123, 136, 150, 157, 168, 174, 186, 194].forEach(c => fill(g, c, 57, 4, 7, MAG));
  line(g, 'M98 38h10', MAG, 4);
  line(g, 'M222 43h14M226 49h8M220 41h8', MAG, 2);
  fill(g, 231, 41, 6, 5, MAG);
  fill(g, 194, 29, 13, 4, GREEN);
  line(g, 'M97 34h16M167 34h16', CYAN, 3, '2 1');
}

function sheet5(x, y) {
  const g = planSheet(x, y);
  line(g, 'M60 26.500H220M60 183.500H220', GREEN);
  columns(g, '#b8a070');
  line(g, 'M59.5 26V183M219.5 26V183', '#b040a0', 3);
  line(g, 'M60 35H220M60 174.5H220', CYAN, 2);
  line(g, 'M96 46.5H183M95 30.5h88v4M95 35v-4M95 179.5h88V175' + box(54.5, 56.5, 4, 97) + box(220.5, 56.5, 4, 97), CYAN);
  line(g, 'M95 32.5H184M95 177H184', CYAN, 4, '1 8');
  line(g, 'M56.5 57V153M222.5 57V153', CYAN, 4, '1 18');
  line(g, 'M78 55.5H201M72 54v-3h23.5V35M183.5 35v16H207v3', YEL);
  line(g, 'M78.5 56V174M200.5 56V174M78 151.5h15', GREEN);
  line(g, 'M61 60h10M208 60h10M61 171h10M208 171h10', GREEN, 6);
  clutter(g, 64, 38, 16, 7, 60);
  clutter(g, 198, 38, 16, 7, 60);
  clutter(g, 71, 48, 14, 3, 20);
  clutter(g, 195, 48, 20, 5, 30);
  line(g, 'M45 39h14M220 39h14', '#6070e8', 2);
  line(g, 'M98 40h10M171 45h5M84 41h5', MAG, 3);
  line(g, 'M61 104h10M206 104h9M149 99h10M158 47h9', WHITE, 2);
}

function paragraph(g, x, y, w, rows) {
  let d = '';
  for (let i = 0; i < rows; i++) {
    if (i % 5 === 4) {
      d += `M${x} ${y + i * 2}h${4 + rnd(8)}`;
      continue;
    }
    const indent = i % 5 === 0 ? 0 : 2;
    d += `M${x + indent} ${y + i * 2}h${w - indent - rnd(Math.max(2, w >> 2))}`;
  }
  line(g, d, '#a800b0', 2);
  line(g, d, MAG, 2, '5 1 3 1 7 1');
}

function schedule(g, x, y, w, h) {
  let rows = '';
  for (let r = 0; r <= h; r += 2) rows += `M${x} ${y + r + 0.5}h${w}`;
  fill(g, x, y, w, h, '#5a2878');
  line(g, rows, '#d030e0');
  line(g, `M${x} ${y + 2.5}h${w}`, '#40b8e8');
  line(g, `M${x + 6} ${y}v${h}M${x + 14} ${y}v${h}M${x + 24} ${y}v${h}M${x + 33} ${y}v${h}`, '#8060e0');
  line(g, `M${x + w / 3} ${y - 1.5}h${w / 3}`, MAG);
}

function notes(x, y) {
  const g = group(x, y);
  line(g, box(0.5, 0.5, 198, 139), GREEN);
  line(g, box(6.5, 2.5, 189, 135), CYAN);
  stamps(g, 2, 2, 4, 46);
  line(g, 'M28 10.5h19M159 57h14M159 95h14', '#50b0f0', 2);
  line(g, 'M30 9h16', MAG, 1, '2 3');
  paragraph(g, 18, 18, 36, 7);
  line(g, 'M20 33h12M20 38h14M20 57h9', '#8070e0', 2);
  paragraph(g, 18, 40, 40, 6);
  schedule(g, 19, 61, 42, 13);
  schedule(g, 19, 80, 42, 14);
  paragraph(g, 18, 98, 40, 2);
  schedule(g, 19, 103, 42, 6);
  paragraph(g, 18, 111, 40, 1);
  schedule(g, 19, 115, 42, 6);
  paragraph(g, 18, 123, 40, 3);
  paragraph(g, 81, 19, 40, 12);
  schedule(g, 82, 44, 42, 6);
  paragraph(g, 81, 52, 42, 8);
  schedule(g, 82, 69, 42, 5);
  paragraph(g, 81, 77, 38, 18);
  line(g, 'M144 19h4', '#8070e0', 3);
  paragraph(g, 142, 25, 38, 12);
  schedule(g, 144, 60, 41, 26);
  clutter(g, 154, 63, 8, 20, 24, CYAN);
  clutter(g, 176, 63, 5, 14, 12, CYAN);
  schedule(g, 144, 98, 41, 14);
  titleBlock(g, 153.5, 125.5, 42, 12);
}

function detailSheet(x, y) {
  const g = group(x, y);
  line(g, box(0.5, 0.5, 139, 99), GREEN);
  line(g, box(6.5, 3.5, 131, 93), CYAN);
  stamps(g, 2, 2, 4, 46);
  titleBlock(g, 94.5, 84.5, 43, 12);
  return g;
}

function details1(x, y) {
  const g = detailSheet(x, y);
  [0, 44].forEach(o => {
    line(g, `M42 ${25 + o}l18-20 4-1v14l-18 19M44 ${31 + o}l20-20M44 ${24 + o}v14M47 ${21 + o}v14M14 ${18 + o}h7M19 ${20 + o}h18M27 ${12 + o}h16q4 0 6 5M29 ${35 + o}h9M30 ${40 + o}h10l4-4 8 6M50 ${35 + o}l-6 5`, MAG);
    line(g, `M20 ${18 + o}l6-3h14v24`, CYAN);
    line(g, `M37.5 ${19 + o}v18`, CYAN, 2);
    line(g, `M23 ${43 + o}h34`, MAG, 2);
    line(g, `M22 ${45.5 + o}h44`, '#40a8e8');
    clutter(g, 26, 12 + o, 18, 26, 40);
  });
  line(g, box(77.5, 10.5, 30, 21) + box(77.5, 42.5, 30, 4) + box(77.5, 63.5, 30, 4), YEL);
  line(g, 'M78 45v22M107 45v22', YEL);
  line(g, box(80.5, 14.5, 22, 14) + box(80.5, 48.5, 22, 14) + 'M102 10.5h9v20h-7M104 53.5h7v10h-7M80 17.5h30M80 58.5h30', MAG);
  line(g, 'M83 7h6M83 41h5M68 30h5M112 30h6', MAG, 2);
  line(g, 'M85.5 19v11M88.5 52v9M70 31h4M112 31h4M77 51h5', CYAN, 2);
  line(g, 'M98 20h4v5h-4z', '#8060e0', 2);
  clutter(g, 82, 18, 8, 12, 14);
  line(g, 'M74 36h34M79 73h26M92 69h6', MAG, 2);
  line(g, 'M73 37.5h44M76 75.5h34', '#40a8e8');
  line(g, 'M84 78.5h26M90 80.5h40M91 82.5h38M100 84.5h20', MAG, 1, '9 1');
  line(g, 'M88 13h4M92 51h3', WHITE, 2);
}

function details2(x, y) {
  const g = detailSheet(x, y);
  line(g, box(34.5, 13.5, 13, 13) + box(48.5, 14.5, 8, 10) + 'M28 24.5h26M40 27v6l-4 3M45 27v5l5 3M22 36.5h18M48 36.5h8M48 11.5h8', MAG);
  line(g, 'M22 35h10M47 11h8', MAG, 2);
  clutter(g, 35, 14, 18, 14, 34);
  line(g, 'M31 42h24', '#a060f0', 3);
  line(g, box(33.5, 56.5, 20, 14) + 'M50 70V58q0-4 6-4M42 70v8M46 70v6M34 78.5h28M56 68.5h8', MAG);
  clutter(g, 36, 58, 18, 14, 34);
  line(g, 'M43.5 65v10M46.5 18v10', CYAN);
  line(g, 'M32 84.5h24', '#50a0f0', 2);
  line(g, 'M35 82.5h16M35 86.5h14', MAG);
  line(g, box(86.5, 20.5, 31, 27) + box(75.5, 30.5, 8, 12) + 'M78 35.5h14M82 40.5h36M104 47V28q4-4 8 0v12M82 50l8-4M82 52.5h10M84 47v-12h10v12M108 50l4 3', MAG);
  clutter(g, 82, 24, 20, 22, 60);
  clutter(g, 82, 28, 18, 14, 14, CYAN);
  line(g, 'M109 52h22M110 54h16', MAG, 2);
  line(g, 'M79 60.5h23M81 58.5h16', '#b060f0');
  line(g, 'M80 61.5h24', '#50a0f0');
}

function tables(x, y) {
  const g = group(x, y);
  for (let i = 0; i < 6; i++) {
    const ox = Math.round(i * 47.7);
    line(g, box(ox + 0.5, 0.5, 47, 67), '#d010d0');
    line(g, box(ox + 8.5, 13.5, 35, 49), GREEN);
    line(g, `M${ox + 26} 15v47`, '#d8dadc', 33, '1 1');
    line(g, `M${ox + 12.5} 15v46M${ox + 19.5} 15v46M${ox + 37.5} 15v46M${ox + 40.5} 15v46`, '#e4e6e8');
    line(g, `M${ox + 19} 5.5h15M${ox + 10} 10.5h7M${ox + 25} 8.5h5M${ox + 36} 11.5h7`, WHITE);
    if (i === 1 || i === 2) {
      clutter(g, ox + 10, 20, 22, 22, 60);
      clutter(g, ox + 10, 52, 6, 8, 20);
      line(g, `M${ox + 28} 26.5h14`, MAG, 2);
      fill(g, ox + 19, 34, 5, 9, MAG);
    }
    if (i === 3 || i === 4) clutter(g, ox + 11, 16, 20, 20, 34, '#e070e0');
    if (i === 5) {
      clutter(g, ox + 10, 16, 18, 10, 40);
      fill(g, ox + 11, 26, 6, 12, MAG);
      line(g, `M${ox + 29} 24v12M${ox + 41} 32v4`, MAG, 3);
    }
  }
  line(g, 'M8 5.5h35', GREEN);
}

sheet2(489, 249);
sheet3(790, 249);
sheet4(489, 598);
sheet5(790, 598);
notes(578, 936);
details1(1116, 870);
details2(1116, 977);
tables(891, 1155);
```
